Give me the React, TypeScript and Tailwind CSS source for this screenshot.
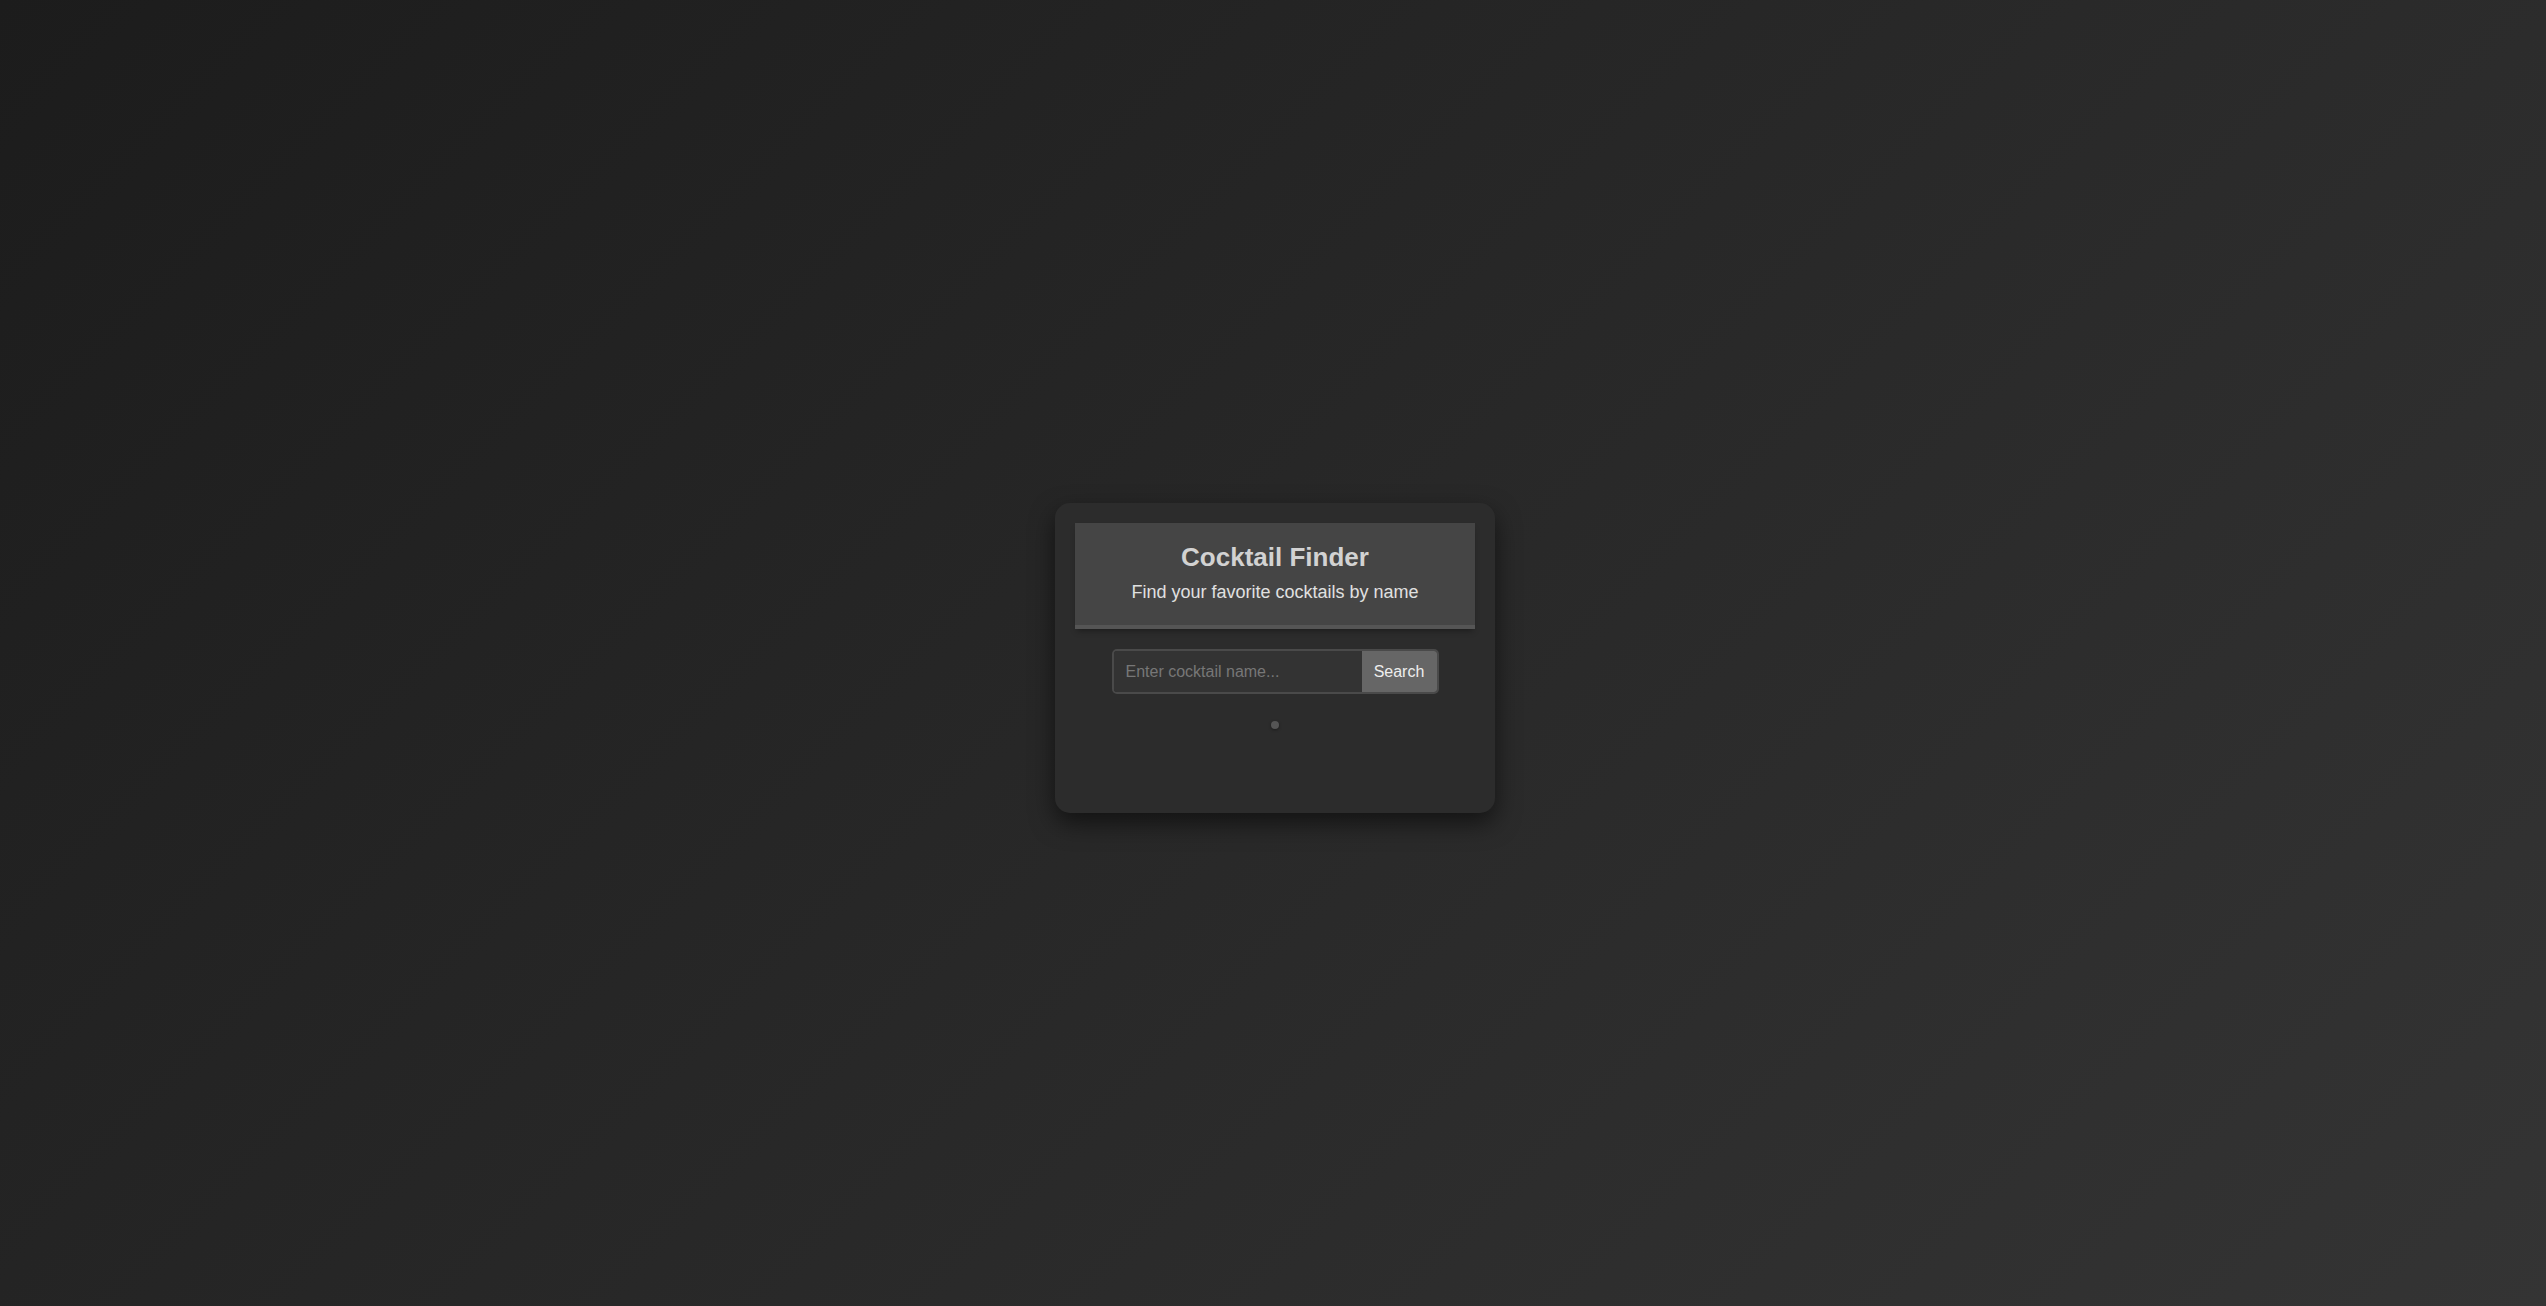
import { useState } from 'react';

export default function App() {
  const [query, setQuery] = useState('');

  return (
    <div
      className="h-screen w-full overflow-hidden flex items-center justify-center bg-[linear-gradient(135deg,#1c1c1c,#343434)] pt-[10px] pl-[4px]"
      style={{ fontFamily: '"Liberation Sans", Arial, sans-serif' }}
    >
      {/* Card */}
      <div className="w-[440px] h-[310px] rounded-[15px] bg-[#2c2c2c] p-5 shadow-[0_10px_25px_rgba(0,0,0,0.55)] flex flex-col items-center">
        {/* Header */}
        <div className="w-full h-[106px] bg-[#454545] border-b-4 border-[#555555] shadow-[0_4px_6px_-2px_rgba(0,0,0,0.35)] flex flex-col items-center pt-[20px]">
          <h1 className="text-[26px] font-bold text-[#d2d2d2] leading-[1.15]">Cocktail Finder</h1>
          <p className="mt-[9px] text-[18px] text-[#e0e0e0] leading-[1.15]">
            Find your favorite cocktails by name
          </p>
        </div>

        {/* Search */}
        <div className="mt-5 flex h-[45px] w-[327px] rounded-[5px] border-2 border-[#4a4a4a] overflow-hidden">
          <input
            value={query}
            onChange={(e) => setQuery(e.target.value)}
            placeholder="Enter cocktail name..."
            className="flex-1 min-w-0 bg-[#333333] px-[12px] text-[16px] text-[#ddd] placeholder:text-[#777777] outline-none"
          />
          <button className="w-[75px] bg-[#666666] text-[16px] text-[#eeeeee]">Search</button>
        </div>

        {/* Loader */}
        <div className="mt-[27px] h-2 w-2 rounded-full bg-[#555555] shadow-[0_1px_3px_rgba(0,0,0,0.4)]" />
      </div>
    </div>
  );
}
